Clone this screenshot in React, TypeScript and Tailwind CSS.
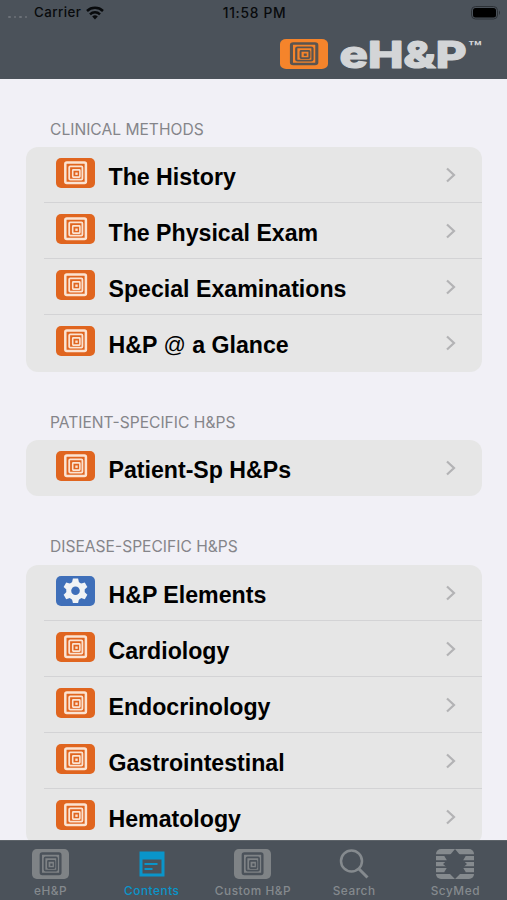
type Tone = 'orange' | 'logo' | 'tab'

const tones: Record<Tone, { box: string; line: string }> = {
  orange: { box: '#e0651f', line: '#fbe3d2' },
  logo: { box: '#f5842b', line: '#5a5450' },
  tab: { box: '#7f8386', line: '#4b525a' },
}

function Maze({ tone, className }: { tone: Tone; className: string }) {
  const { box, line } = tones[tone]
  return (
    <svg viewBox="0 0 39 30" preserveAspectRatio="none" className={className}>
      <rect width="39" height="30" rx="5" fill={box} />
      <g fill="none" stroke={line} strokeWidth="1.8">
        <rect x="9.3" y="4.4" width="20.6" height="20.6" rx="1.5" strokeWidth="2.5" />
        <rect x="13.2" y="8.4" width="13.2" height="13.2" rx="1" />
        <rect x="16.7" y="11.9" width="7.2" height="7.2" rx=".6" strokeWidth="1.6" />
      </g>
      <rect x="19.3" y="14.5" width="2.4" height="2.4" fill={line} />
    </svg>
  )
}

function Gear() {
  return (
    <svg viewBox="0 0 39 30" className="h-[30px] w-[39px] shrink-0">
      <rect width="39" height="30" rx="5" fill="#3f6fb9" />
      <g transform="translate(19.5 14.8)" fill="#f1f3f5">
        {[0, 60, 120].map((a) => (
          <path key={a} transform={`rotate(${a})`} d="M-2.6-12.2H2.6L3.8-7V7L2.6 12.2H-2.6L-3.8 7V-7Z" />
        ))}
        <circle r="9.3" />
        <circle r="4.3" fill="#3f6fb9" />
      </g>
    </svg>
  )
}

const groups = [
  { title: 'CLINICAL METHODS', rows: ['The History', 'The Physical Exam', 'Special Examinations', 'H&P @ a Glance'] },
  { title: 'PATIENT-SPECIFIC H&PS', rows: ['Patient-Sp H&Ps'] },
  { title: 'DISEASE-SPECIFIC H&PS', rows: ['H&P Elements', 'Cardiology', 'Endocrinology', 'Gastrointestinal', 'Hematology'] },
]

function Row({ label, last }: { label: string; last: boolean }) {
  const [before, after] = label.split('@')
  return (
    <div className="h-[56.15px] pl-[18px]">
      <div className={`flex h-full pl-3 pr-[26px] ${last ? '' : 'border-b border-[#d3d3d5]'}`}>
        <div className="pt-[11px]">
          {label === 'H&P Elements' ? <Gear /> : <Maze tone="orange" className="h-[30px] w-[39px] shrink-0" />}
        </div>
        <span className="ml-[14px] flex-1 whitespace-pre pt-[14px] text-[23.15px] leading-8 font-bold text-black">
          {before}
          {after && <span className="align-[1px] text-[22px] leading-none font-normal">@</span>}
          {after}
        </span>
        <svg viewBox="0 0 10 16" className="mt-5 h-4 w-[10px]" fill="none" stroke="#b3b3b5" strokeWidth="2.2">
          <path d="M1 1.5 8 8 1 14.5" />
        </svg>
      </div>
    </div>
  )
}

function Header() {
  return (
    <header className="h-[79px] shrink-0 bg-[#4b525a]">
      <div className="grid h-[26px] grid-cols-3 items-center pl-2 pr-[6px] font-['Inter'] text-[13.3px] font-medium text-[#080a0c]">
        <div className="flex items-center">
          <span className="flex w-[26px] gap-[3px] pt-2">
            {[0, 1, 2, 3].map((i) => (
              <i key={i} className="size-[2.5px] rounded-full bg-[#6c7279]" />
            ))}
          </span>
          <span className="tracking-[.45px]">Carrier</span>
          <svg viewBox="0 0 18 14" className="ml-[5px] h-[14px] w-[18px]" fill="none" stroke="#080a0c" strokeWidth="2.5">
            <path d="M1 5C5.5.8 12.5.8 17 5" />
            <path d="M4 8.3C6.8 5.7 11.2 5.7 14 8.3" />
            <path d="m9 13.5-2.8-3Q9 8.2 11.8 10.5Z" fill="#080a0c" stroke="none" />
          </svg>
        </div>
        <span className="text-center text-[13.8px] tracking-[.7px]">11:58 PM</span>
        <svg viewBox="0 0 30 14" className="h-[14px] w-[30px] justify-self-end">
          <rect x=".5" y=".5" width="26" height="12.5" rx="4" fill="none" stroke="#2c3136" />
          <rect x="2" y="2" width="23" height="9.5" rx="2.5" />
          <path d="M28 4.5q2 2.2 0 4.5Z" fill="#2c3136" />
        </svg>
      </div>
      <div className="flex h-[53px] pl-[280px] pt-[13px]">
        <Maze tone="logo" className="h-[30px] w-[48px]" />
        <svg viewBox="0 0 150 34" className="ml-[11px] h-[34px] w-[150px] overflow-visible" fill="#d3d5d7" fontFamily="Inter">
          <text x=".5" y="29.3" fontSize="37.5" fontWeight="800" textLength="127" lengthAdjust="spacingAndGlyphs" stroke="#d3d5d7" strokeWidth="1.2" strokeLinejoin="round">
            eH&amp;P
          </text>
          <text x="129" y="13" fontSize="14" fontWeight="700" textLength="14" lengthAdjust="spacingAndGlyphs">™</text>
        </svg>
      </div>
    </header>
  )
}

function TabBar() {
  const tab = 'flex w-[101.2px] flex-col items-center'
  return (
    <nav className="flex h-[60px] shrink-0 border-t border-[#5d6369] bg-[#4b525a] pt-[8px] font-['Inter'] text-[11.8px] leading-4 font-medium tracking-[.55px] text-[#858a8e]">
      <div className={tab}>
        <Maze tone="tab" className="mb-[4px] h-[30px] w-[37px]" />
        eH&amp;P
      </div>
      <div className={`${tab} text-[#0a95ca]`}>
        <svg viewBox="0 0 26 30" className="mb-[4px] ml-px h-[30px] w-[26px]">
          <path fill="#0a95ca" d="M.5 2.5h25v25H.5Z" />
          <path fill="#4b525a" d="M3.5 10.5h19v14h-19Z" />
          <path stroke="#0a95ca" strokeWidth="2.2" d="M5.5 15h13M5.5 20h8" />
        </svg>
        Contents
      </div>
      <div className={tab}>
        <Maze tone="tab" className="mb-[4px] h-[30px] w-[37px]" />
        Custom H&amp;P
      </div>
      <div className={tab}>
        <svg viewBox="0 0 30 30" className="mb-[4px] size-[30px]" fill="none" stroke="#858a8e" strokeWidth="2.5">
          <circle cx="12.5" cy="12" r="10.5" />
          <path d="m19.5 19.5 9 9" strokeWidth="3" />
        </svg>
        Search
      </div>
      <div className={tab}>
        <svg viewBox="0 0 38 30" className="mb-[4px] h-[30px] w-[38px]">
          <rect width="38" height="30" rx="5" fill="#858a8e" />
          <path stroke="#4b525a" strokeWidth="1.7" d="M0 6.2h38M0 12.2h38M0 18.2h38M0 24.2h38" />
          <path fill="#4b525a" d="m19 0 5 6 6 .5-3 5 4 3.500-4 3.500 3 5-6 1.500L19 30l-5-5-6-1.500 3-5L7 15l4-3.500-3-5 6-.5Z" />
        </svg>
        ScyMed
      </div>
    </nav>
  )
}

function App() {
  return (
    <div className="flex h-[900px] w-[507px] flex-col overflow-hidden bg-[#f1f0f6] font-['Liberation_Sans',sans-serif]">
      <Header />
      <main className="min-h-0 flex-1 overflow-hidden px-[25.5px] pt-[40px]">
        {groups.map((group) => (
          <section key={group.title} className="mb-[40.5px]">
            <h2 className="h-[28px] pl-[24.5px] pt-[1.5px] font-['Inter'] text-[15.6px] leading-[18px] text-[#85858a]">
              {group.title}
            </h2>
            <div className="overflow-hidden rounded-[12px] bg-[#e6e6e6]">
              {group.rows.map((row, i) => (
                <Row key={row} label={row} last={i === group.rows.length - 1} />
              ))}
            </div>
          </section>
        ))}
      </main>
      <TabBar />
    </div>
  )
}

export default App
